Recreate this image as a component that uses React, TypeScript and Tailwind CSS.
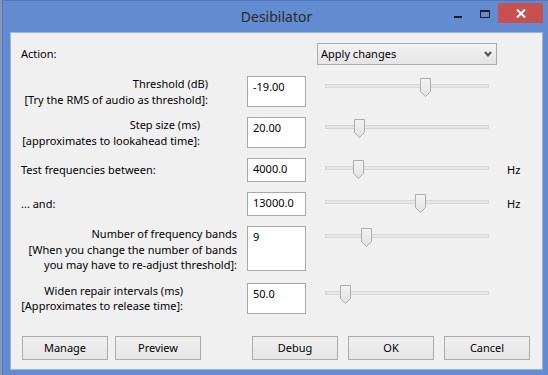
import React from "react";

type Row = {
  lines: string[];
  labelClass: string;
  value: string;
  boxClass: string;
  thumb: number;
  hz?: boolean;
};

const rows: Row[] = [
  {
    lines: ["Threshold (dB)", "[Try the RMS of audio as threshold]:"],
    labelClass: "w-[187px] text-right",
    value: "-19.00",
    boxClass: "h-[31px]",
    thumb: 95,
  },
  {
    lines: ["Step size (ms)", "[approximates to lookahead time]:"],
    labelClass: "w-[179px] text-right",
    value: "20.00",
    boxClass: "h-[31px]",
    thumb: 29,
  },
  {
    lines: ["Test frequencies between:"],
    labelClass: "",
    value: "4000.0",
    boxClass: "h-[24px]",
    thumb: 28,
    hz: true,
  },
  {
    lines: ["... and:"],
    labelClass: "",
    value: "13000.0",
    boxClass: "h-[24px]",
    thumb: 90,
    hz: true,
  },
  {
    lines: [
      "Number of frequency bands",
      "[When you change the number of bands",
      "you may have to re-adjust threshold]:",
    ],
    labelClass: "ml-[4px] w-[212px] text-right",
    value: "9",
    boxClass: "h-[45px]",
    thumb: 36,
  },
  {
    lines: ["Widen repair intervals (ms)", "[Approximates to release time]:"],
    labelClass: "w-[162px] text-right",
    value: "50.0",
    boxClass: "h-[31px]",
    thumb: 15,
  },
];

function Slider({ pos }: { pos: number }) {
  return (
    <div className="relative mt-[2px] ml-[19px] h-[20px] w-[164px] shrink-0 self-start">
      <div className="mt-[6px] h-[4px] w-full border border-[#d6d6d6] bg-[#e7e7e7]" />
      <svg
        className="absolute top-0"
        style={{ left: pos }}
        width="11"
        height="19"
        viewBox="0 0 11 19"
      >
        <defs>
          <linearGradient id="thumbFill" x1="0" y1="0" x2="0" y2="1">
            <stop offset="0" stopColor="#f3f3f3" />
            <stop offset="1" stopColor="#e2e2e2" />
          </linearGradient>
        </defs>
        <path
          d="M0.5 0.5 H10.5 V13.5 L5.5 18.5 L0.5 13.5 Z"
          fill="url(#thumbFill)"
          stroke="#acacac"
          strokeWidth="1"
        />
      </svg>
    </div>
  );
}

function Button({ label, className = "" }: { label: string; className?: string }) {
  return (
    <button
      className={`h-[24px] w-[86px] border border-[#acacac] bg-gradient-to-b from-[#f0f0f0] to-[#e5e5e5] text-black ${className}`}
    >
      {label}
    </button>
  );
}

export default function App() {
  return (
    <div
      className="flex h-[375px] w-[548px] overflow-hidden bg-[#8797b5] text-[11px] leading-[16px] text-black"
      style={{ fontFamily: '"Segoe UI", "Noto Sans", sans-serif' }}
    >
      <div className="w-[2px] shrink-0" />
      <div className="flex flex-1 flex-col border-t border-l border-[#5078c0] bg-[#628bd1] pr-[5px] pl-[7px] pb-[5px]">
        {/* title bar */}
        <div className="relative flex h-[31px] shrink-0 items-start">
          <div className="absolute inset-x-0 top-[6px] text-center text-[14px] leading-[20px] text-[#2a2a2a]">
            Desibilator
          </div>
          <div className="relative ml-auto flex items-start pt-[2px]">
            <div className="mt-[13px] h-[2px] w-[8px] bg-[#1e1e1e]" />
            <div className="mt-[7px] ml-[18px] h-[8px] w-[10px] border border-t-2 border-[#1e1e1e]" />
            <div className="ml-[8px] flex h-[20px] w-[45px] items-center justify-center bg-[#c75050]">
              <svg width="10" height="9" viewBox="0 0 10 9">
                <path d="M1 0.5 L9 8.5 M9 0.5 L1 8.5" stroke="#ffffff" strokeWidth="2" />
              </svg>
            </div>
          </div>
        </div>

        {/* client area */}
        <div className="flex flex-1 flex-col border border-[#9fb3d9] bg-[#f0f0f0] pt-[10px] pl-[10px]">
          <div className="flex h-[22px] items-center">
            <div className="w-[296px] shrink-0">Action:</div>
            <div className="flex h-[22px] w-[180px] items-center justify-between border border-[#acacac] bg-gradient-to-b from-[#f2f2f2] to-[#e5e5e5] pr-[4px] pl-[3px]">
              <span>Apply changes</span>
              <svg width="8" height="6" viewBox="0 0 8 6">
                <path d="M1 1 L4 4.5 L7 1" stroke="#505050" strokeWidth="2" fill="none" />
              </svg>
            </div>
          </div>

          <div className="mt-[11px] flex flex-col gap-[10px]">
            {rows.map((row) => (
              <div key={row.value} className="flex items-center">
                <div className="w-[226px] shrink-0">
                  <div className={`whitespace-nowrap leading-[15.5px] ${row.labelClass}`}>
                    {row.lines.map((line) => (
                      <div key={line}>{line}</div>
                    ))}
                  </div>
                </div>
                <div
                  className={`w-[59px] shrink-0 self-start border border-[#a9a9a9] bg-white pt-[2px] pl-[5px] ${row.boxClass}`}
                >
                  {row.value}
                </div>
                <Slider pos={row.thumb} />
                {row.hz && <span className="ml-[18px]">Hz</span>}
              </div>
            ))}
          </div>

          <div className="mt-[22px] flex pr-[12px] pl-[1px]">
            <Button label="Manage" />
            <Button label="Preview" className="ml-[7px]" />
            <div className="flex-1" />
            <Button label="Debug" />
            <Button label="OK" className="ml-[10px]" />
            <Button label="Cancel" className="ml-[10px]" />
          </div>
        </div>
      </div>
    </div>
  );
}
